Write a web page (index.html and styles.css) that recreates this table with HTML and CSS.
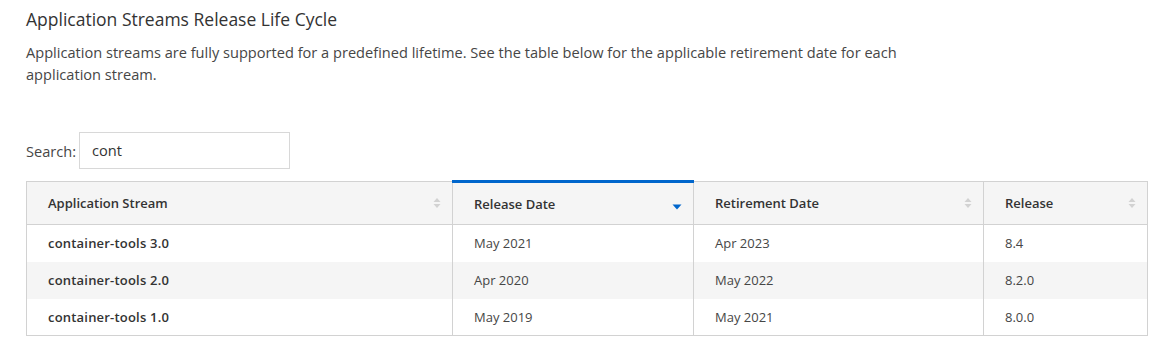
FILE: index.html
```html
<!DOCTYPE html>
<html>
<head>
<meta charset="utf-8">
<link rel="stylesheet" href="styles.css">
</head>
<body>
<div class="page">
  <h2 class="title">Application Streams Release Life Cycle</h2>
  <p class="desc">Application streams are fully supported for a predefined lifetime. See the table below for the applicable retirement date for each application stream.</p>
  <div class="search">
    <label class="search-label">Search:</label>
    <div class="search-input">cont</div>
  </div>
  <table class="grid">
    <colgroup>
      <col class="c1"><col class="c2"><col class="c3"><col class="c4">
    </colgroup>
    <thead>
      <tr>
        <th><div class="th-in"><span>Application Stream</span><svg class="sort" viewBox="0 0 8 12" width="8" height="12"><path d="M4 1 L7.5 5 H0.5 Z M4 11 L7.5 7 H0.5 Z" fill="#d2d2d2"/></svg></div></th>
        <th class="active"><div class="th-in"><span>Release Date</span><svg class="sort down" viewBox="0 0 10 6" width="10" height="6"><path d="M0.5 0.5 H9.5 L5 5.5 Z" fill="#0066cc"/></svg></div></th>
        <th><div class="th-in"><span>Retirement Date</span><svg class="sort" viewBox="0 0 8 12" width="8" height="12"><path d="M4 1 L7.5 5 H0.5 Z M4 11 L7.5 7 H0.5 Z" fill="#d2d2d2"/></svg></div></th>
        <th><div class="th-in"><span>Release</span><svg class="sort" viewBox="0 0 8 12" width="8" height="12"><path d="M4 1 L7.5 5 H0.5 Z M4 11 L7.5 7 H0.5 Z" fill="#d2d2d2"/></svg></div></th>
      </tr>
    </thead>
    <tbody>
      <tr><td class="name">container-tools 3.0</td><td>May 2021</td><td>Apr 2023</td><td>8.4</td></tr>
      <tr class="alt"><td class="name">container-tools 2.0</td><td>Apr 2020</td><td>May 2022</td><td>8.2.0</td></tr>
      <tr><td class="name">container-tools 1.0</td><td>May 2019</td><td>May 2021</td><td>8.0.0</td></tr>
    </tbody>
  </table>
</div>
</body>
</html>
```

FILE: styles.css
```css
* { box-sizing: border-box; }
html, body { margin: 0; padding: 0; background: #fff; }
body { font-family: "Open Sans", "Liberation Sans", sans-serif; color: #333; }
.page { padding: 8px 23px 0 26px; }
.title {
  margin: 0;
  font-size: 17.5px;
  font-weight: 500;
  line-height: 22px;
  color: #333;
}
.desc {
  margin: 11px 0 0 0;
  width: 920px;
  font-size: 14.6px;
  line-height: 22px;
  color: #464646;
}
.search {
  display: flex;
  align-items: center;
  margin-top: 47px;
  height: 37px;
}
.search-label { font-size: 14.6px; color: #464646; margin-right: 3px; }
.search-input {
  width: 211px;
  height: 37px;
  border: 1px solid #d8d8d8;
  padding: 0 12px;
  font-size: 14.6px;
  line-height: 35px;
  color: #333;
}
.grid {
  margin-top: 11px;
  width: 1121px;
  border-collapse: collapse;
  border: 1px solid #d2d2d2;
  table-layout: fixed;
  font-size: 13px;
}
.c1 { width: 426px; }
.c2 { width: 241px; }
.c3 { width: 290px; }
.c4 { width: 164px; }
th {
  background: #f5f5f5;
  height: 43px;
  padding: 0 11px 0 21px;
  text-align: left;
  font-weight: 600;
  color: #333;
  border: 1px solid #d2d2d2;
}
th.active { border-top: 3px solid #0066cc; }
.th-in { display: flex; align-items: center; justify-content: space-between; }
.sort.down { margin-top: 7px; }
td {
  height: 37px;
  padding: 0 21px;
  border-left: 1px solid #d2d2d2;
  color: #464646;
}
td.name { font-weight: 600; color: #333; letter-spacing: 0.2px; }
tr.alt td { background: #f5f5f5; }
```
